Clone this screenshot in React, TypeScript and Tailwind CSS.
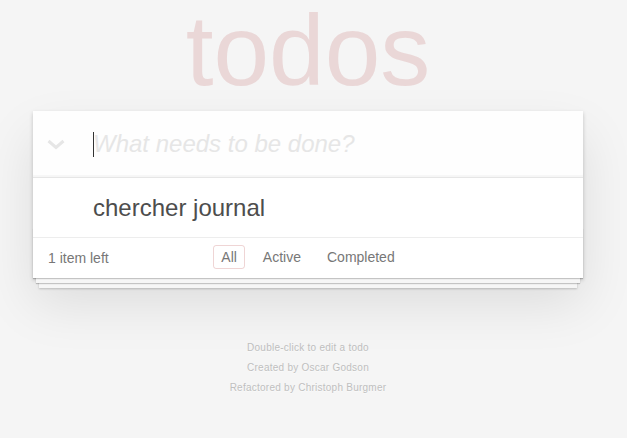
import React from "react";

export default function App() {
  return (
    <div
      className="min-h-[438px] w-full bg-[#f5f5f5] text-[14px] text-[#4d4d4d]"
      style={{ fontFamily: '"Liberation Sans", Arial, sans-serif' }}
    >
      <div className="ml-[33px] w-[550px]">
        <h1 className="h-[100px] text-center text-[100px] font-thin leading-none text-[rgba(175,47,47,0.15)]">
          todos
        </h1>
        <div className="relative mt-[11px] bg-white shadow-[0_2px_4px_0_rgba(0,0,0,0.2),0_25px_50px_0_rgba(0,0,0,0.1)]">
          {/* header input */}
          <div className="relative flex h-[66px] items-center bg-[rgba(0,0,0,0.003)] pl-[60px] pr-4 shadow-[inset_0_-2px_1px_rgba(0,0,0,0.03)]">
            <svg
              className="absolute left-[14px] top-[28px]"
              width="18"
              height="11"
              viewBox="0 0 18 11"
            >
              <path
                d="M1.5 2 L9 8.5 L16.5 2"
                fill="none"
                stroke="#e6e6e6"
                strokeWidth="3"
              />
            </svg>
            <span className="mr-[-1px] h-[25px] w-px bg-[#333]" />
            <span className="text-[24px] font-light italic leading-[34px] text-[#e6e6e6]">
              What needs to be done?
            </span>
          </div>
          {/* list */}
          <div className="border-t border-[#e6e6e6]">
            <div className="border-b border-[#ededed]">
              <div className="ml-[45px] pb-[15px] pl-[15px] pr-[60px] pt-[15px] text-[24px] font-light leading-[29px] text-[#4d4d4d]">
                chercher journal
              </div>
            </div>
          </div>
          {/* footer */}
          <div className="relative flex h-[40px] items-center px-[15px] text-[#777]">
            <div className="absolute bottom-0 left-0 right-0 h-[50px] overflow-hidden shadow-[0_1px_1px_rgba(0,0,0,0.2),0_8px_0_-3px_#f6f6f6,0_9px_1px_-3px_rgba(0,0,0,0.2),0_16px_0_-6px_#f6f6f6,0_17px_2px_-6px_rgba(0,0,0,0.2)]" />
            <span className="relative leading-[20px]">1 item left</span>
            <div className="absolute left-0 right-0 top-[7px] flex justify-center gap-[4px]">
              <span className="mx-[3px] rounded-[3px] border border-[rgba(175,47,47,0.2)] px-[7px] py-[3px] leading-[16px]">
                All
              </span>
              <span className="mx-[3px] rounded-[3px] border border-transparent px-[7px] py-[3px] leading-[16px]">
                Active
              </span>
              <span className="mx-[3px] rounded-[3px] border border-transparent px-[7px] py-[3px] leading-[16px]">
                Completed
              </span>
            </div>
          </div>
        </div>
        {/* info */}
        <div className="mt-[65px] text-center text-[10px] leading-none tracking-[0.25px] text-[#bfbfbf] [text-shadow:0_1px_0_rgba(255,255,255,0.5)]">
          <p className="my-[10px]">Double-click to edit a todo</p>
          <p className="my-[10px]">Created by Oscar Godson</p>
          <p className="my-[10px]">Refactored by Christoph Burgmer</p>
        </div>
      </div>
    </div>
  );
}
